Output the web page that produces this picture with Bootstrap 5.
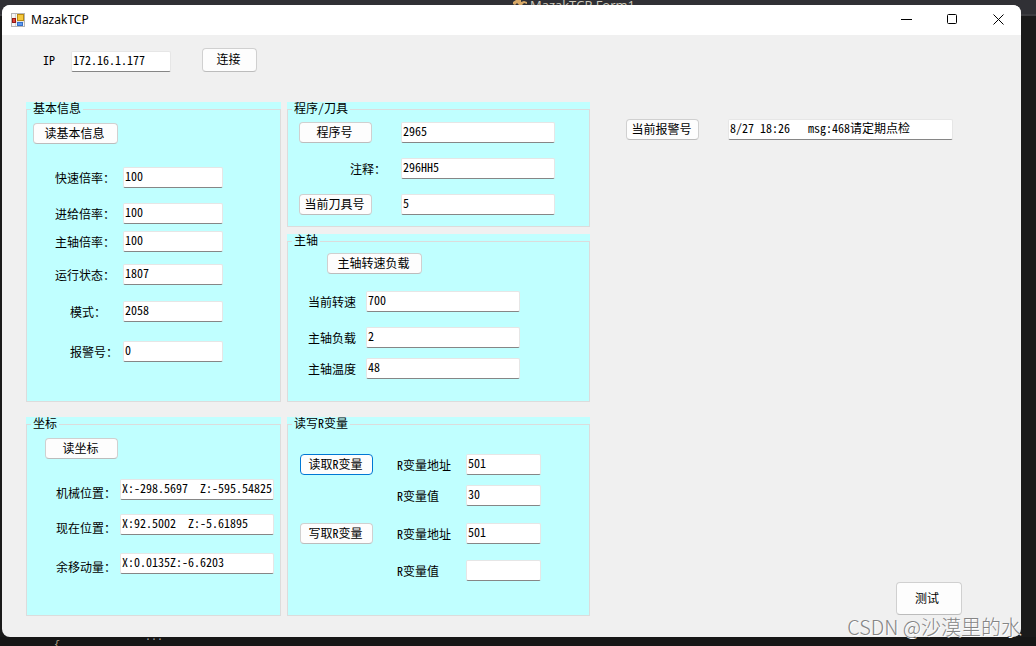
<!DOCTYPE html>
<html lang="zh-CN">
<head>
<meta charset="utf-8">
<meta name="viewport" content="width=device-width, initial-scale=1">
<title>MazakTCP</title>
<link href="https://cdn.jsdelivr.net/npm/bootstrap@5.3.0/dist/css/bootstrap.min.css" rel="stylesheet">
<style>
  body {
    background: linear-gradient(#303035 0 14px, #3c3c40 14px 16px, #1a1a1a 16px);
    color: #000;
    font: 12px/14px "Noto Sans CJK SC", sans-serif;
    font-feature-settings: "hwid";
  }
  /* editor window behind the form */
  .editor-tab { height: 5px; padding-left: 513px; overflow: hidden; color: #cfcbbd; }
  .editor-tab span { font: 13px/11px "Open Sans", sans-serif; font-feature-settings: normal; }
  .editor-foot { height: 9px; padding-left: 54px; background: #161616; color: #b9a58a; overflow: hidden; }
  .editor-foot span { font: 10px/18px "Liberation Mono", monospace; }
  .editor-foot .fold { margin-left: 85px; line-height: 2px; color: #aaa; }

  .app-window { margin: 0 15px 0 2px; background: #f0f0f0; border-radius: 8px; min-height: calc(100vh - 14px); overflow: hidden; }
  .title-bar { height: 30px; background: #fff; padding-left: 9px; font-family: "Open Sans", sans-serif; font-feature-settings: normal; }
  .title-bar span { margin-left: 6px; font-family: "Noto Sans", sans-serif; }
  .win-btn { width: 46px; height: 30px; border: 0; background: none; padding: 0 0 1px; display: grid; place-items: center; }
  .win-body { padding: 13px 24px 21px; }
  .tool-row { height: 54px; padding-left: 17px; }
  .tool-row label { line-height: 24px; width: 28px; }
  .tool-row .tb { margin-top: 3px; }
  .tool-row .pb { width: 55px; height: 24px; margin-left: 31px; }

  .form-grid { display: grid; grid-template-columns: 255fr 303fr 401fr; gap: 6px; }
  .g-basic { min-height: 300px; margin-bottom: 15px; }
  .g-program { min-height: 125px; margin-bottom: 7px; }
  .g-spindle { min-height: 168px; margin-bottom: 15px; }
  .g-low { min-height: 199px; }

  .group-box { background: #c0ffff; display: flex; }
  .group-box fieldset { flex: 1; border: 1px solid #dcdcdc; padding: 0; }
  .group-box legend { float: none; width: auto; height: 14px; margin: 0 0 0 4px; padding: 0 2px; font-size: 12px; line-height: 12px; }

  .tb { width: 154px; height: 21px; min-height: 0; padding: 0 1px 4px; font-size: 12px; line-height: 14px; color: #000;
        background: #fff; border: 1px solid #e6e6e6; border-bottom-color: #868686; border-radius: 2px; font-feature-settings: inherit; }
  .tb-s { width: 100px; }
  .tb-xs { width: 75px; }
  .tb-l { width: 225px; margin-left: 29px; }
  .pb { height: 21px; width: 73px; padding: 0 2px 2px 0; font-size: 12px; line-height: 14px; color: #000; font-feature-settings: inherit;
        background: #fdfdfd; border: 1px solid #d0d0d0; border-bottom-color: #bcbcbc; border-radius: 4px; white-space: nowrap; }
  .pb-focus { border-color: #0078d4; }
  .pb-wide { width: 85px; }
  .pb-wider { width: 95px; }

  .head-basic { padding: 7px 0 0 6px; }
  .head-coord { padding: 7px 0 0 18px; }
  .head-spindle { padding: 5px 0 0 39px; }

  .fields { display: grid; align-items: start; justify-content: start; }
  .fields label { line-height: 21px; white-space: nowrap; }
  .fields .indent { padding-left: 15px; }
  .f-basic { grid-template: 36px 28px 33px 37px 40px 21px / 68px auto; margin: 23px 0 0 28px; }
  .f-program { grid-template: 36px 36px 21px / 102px auto; padding: 6px 0 0 11px; }
  .f-program label { padding-left: 51px; }
  .f-spindle { grid-template: 36px 31px 21px / 58px auto; margin: 17px 0 0 20px; }
  .f-coord { grid-template: 35px 39px 21px / 64px auto; margin: 20px 0 0 29px; }
  .f-coord label { padding-top: 3px; }
  .f-rvar { grid-template: 31px 38px 37px 21px / 97px 69px auto; padding: 23px 0 0 12px; }
  .side-col { padding: 17px 35px 1px 30px; }
  .test-btn { width: 66px; height: 33px; padding-right: 4px; }
  .watermark { right: 15px; bottom: 8px; font-size: 20px; line-height: 22px; font-weight: 300; color: #858585; text-shadow: 1px 1px #fff; font-feature-settings: normal; pointer-events: none; }
</style>
</head>
<body>
<div class="editor-tab d-flex" aria-hidden="true">
  <svg width="17" height="5" viewBox="0 0 17 5"><path d="M0 2 3 0h5v2l3-1 3 1v2l-3-1-2 2H6L4 3 2 5 0 4z" fill="#d8a968"/></svg>
  <span>MazakTCP.Form1</span>
</div>

<main class="app-window">
  <header class="title-bar d-flex align-items-center">
    <svg width="14" height="14" viewBox="0 0 14 14" aria-hidden="true">
      <rect x=".5" y=".5" width="13" height="13" fill="#f6f6f6" stroke="#b5b5b5"/>
      <path d="M4.5 1v12M1 9h12" stroke="#d0d0d0"/>
      <rect x="6.5" y="1.5" width="6" height="6" fill="#f6c93e" stroke="#b98b12"/>
      <rect x="1.5" y="5.5" width="3" height="4" fill="#e0433a" stroke="#961915"/>
      <rect x="6.5" y="9.5" width="5" height="3" fill="#5e9af0" stroke="#356fc8"/>
    </svg>
    <span class="me-auto">MazakTCP</span>
    <button type="button" class="win-btn" aria-label="最小化"><svg width="11" height="11" viewBox="0 0 11 11"><path d="M0 5.5h11" stroke="#000"/></svg></button>
    <button type="button" class="win-btn" aria-label="最大化"><svg width="11" height="11" viewBox="0 0 11 11"><rect x=".5" y=".5" width="9" height="9" rx="1" fill="none" stroke="#000"/></svg></button>
    <button type="button" class="win-btn" aria-label="关闭"><svg width="11" height="11" viewBox="0 0 11 11"><path d="M.5.5l10 10M10.5.5l-10 10" stroke="#000"/></svg></button>
  </header>

  <div class="win-body">
    <div class="tool-row d-flex align-items-start">
      <label for="ip">IP</label>
      <input id="ip" class="tb tb-s" value="172.16.1.177">
      <button type="button" class="pb">连接</button>
    </div>

    <div class="form-grid">
      <div class="d-flex flex-column">
        <div class="group-box g-basic">
          <fieldset>
            <legend>基本信息</legend>
            <div class="head-basic d-flex"><button type="button" class="pb pb-wide">读基本信息</button></div>
            <div class="fields f-basic">
              <label for="b1">快速倍率：</label><input id="b1" class="tb tb-s" value="100">
              <label for="b2">进给倍率：</label><input id="b2" class="tb tb-s" value="100">
              <label for="b3">主轴倍率：</label><input id="b3" class="tb tb-s" value="100">
              <label for="b4">运行状态：</label><input id="b4" class="tb tb-s" value="1807">
              <label for="b5" class="indent">模式：</label><input id="b5" class="tb tb-s" value="2058">
              <label for="b6" class="indent">报警号：</label><input id="b6" class="tb tb-s" value="0">
            </div>
          </fieldset>
        </div>
        <div class="group-box g-low">
          <fieldset>
            <legend>坐标</legend>
            <div class="head-coord d-flex"><button type="button" class="pb">读坐标</button></div>
            <div class="fields f-coord">
              <label for="c1">机械位置：</label><input id="c1" class="tb" value="X:-298.5697  Z:-595.54825">
              <label for="c2">现在位置：</label><input id="c2" class="tb" value="X:92.5002  Z:-5.61895">
              <label for="c3">余移动量：</label><input id="c3" class="tb" value="X:0.0135Z:-6.6203">
            </div>
          </fieldset>
        </div>
      </div>

      <div class="d-flex flex-column">
        <div class="group-box g-program">
          <fieldset>
            <legend>程序/刀具</legend>
            <div class="fields f-program">
              <button type="button" class="pb">程序号</button><input class="tb" aria-label="程序号" value="2965">
              <label for="p2">注释：</label><input id="p2" class="tb" value="296HH5">
              <button type="button" class="pb">当前刀具号</button><input class="tb" aria-label="当前刀具号" value="5">
            </div>
          </fieldset>
        </div>
        <div class="group-box g-spindle">
          <fieldset>
            <legend>主轴</legend>
            <div class="head-spindle d-flex"><button type="button" class="pb pb-wider">主轴转速负载</button></div>
            <div class="fields f-spindle">
              <label for="s1">当前转速</label><input id="s1" class="tb" value="700">
              <label for="s2">主轴负载</label><input id="s2" class="tb" value="2">
              <label for="s3">主轴温度</label><input id="s3" class="tb" value="48">
            </div>
          </fieldset>
        </div>
        <div class="group-box g-low">
          <fieldset>
            <legend>读写R变量</legend>
            <div class="fields f-rvar">
              <button type="button" class="pb pb-focus">读取R变量</button>
              <label for="r1">R变量地址</label><input id="r1" class="tb tb-xs" value="501">
              <span></span>
              <label for="r2">R变量值</label><input id="r2" class="tb tb-xs" value="30">
              <button type="button" class="pb">写取R变量</button>
              <label for="r3">R变量地址</label><input id="r3" class="tb tb-xs" value="501">
              <span></span>
              <label for="r4">R变量值</label><input id="r4" class="tb tb-xs" value="">
            </div>
          </fieldset>
        </div>
      </div>

      <div class="side-col d-flex flex-column justify-content-between">
        <div class="d-flex">
          <button type="button" class="pb">当前报警号</button>
          <input class="tb tb-l" aria-label="当前报警号" value="8/27 18:26   msg:468请定期点检">
        </div>
        <button type="button" class="pb test-btn align-self-end">测试</button>
      </div>
    </div>
  </div>
</main>
<div class="editor-foot d-flex" aria-hidden="true"><span>{</span><span class="fold">...</span></div>
<div class="watermark position-absolute">CSDN @沙漠里的水</div>
<script src="https://cdn.jsdelivr.net/npm/bootstrap@5.3.0/dist/js/bootstrap.bundle.min.js"></script>
</body>
</html>
